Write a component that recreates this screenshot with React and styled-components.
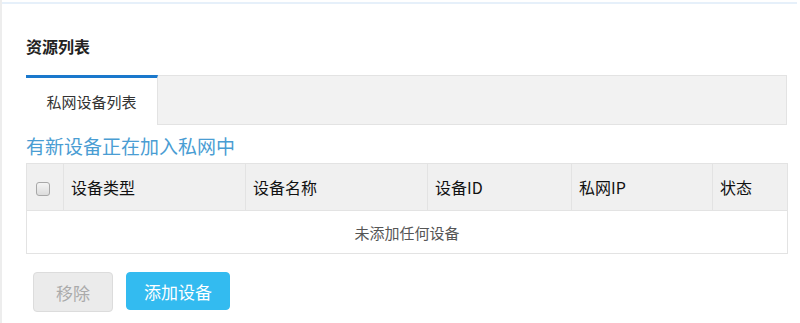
import styled, { createGlobalStyle } from "styled-components";

const GlobalStyle = createGlobalStyle`
  body {
    margin: 0;
    background: #fff;
    font-family: "Microsoft YaHei", "Noto Sans CJK SC", "Liberation Sans", sans-serif;
  }
`;

const columns = [
  { key: "type", label: "设备类型", width: 182 },
  { key: "name", label: "设备名称", width: 182 },
  { key: "id", label: "设备ID", width: 144 },
  { key: "ip", label: "私网IP", width: 141 },
  { key: "status", label: "状态", width: 75 },
];

function App() {
  return (
    <>
      <GlobalStyle />
      <Page>
        <TopLine />
        <Content>
          <Title>资源列表</Title>

          <TabBar>
            <Tab $active>私网设备列表</Tab>
          </TabBar>

          <Notice>有新设备正在加入私网中</Notice>

          <Table>
            <colgroup>
              <col style={{ width: 37 }} />
              {columns.map((c) => (
                <col key={c.key} style={{ width: c.width }} />
              ))}
            </colgroup>
            <thead>
              <tr>
                <HeadCell $center>
                  <CheckBox type="checkbox" />
                </HeadCell>
                {columns.map((c) => (
                  <HeadCell key={c.key}>{c.label}</HeadCell>
                ))}
              </tr>
            </thead>
            <tbody>
              <tr>
                <EmptyCell colSpan={columns.length + 1}>未添加任何设备</EmptyCell>
              </tr>
            </tbody>
          </Table>

          <Actions>
            <Button $variant="disabled">移除</Button>
            <Button $variant="primary">添加设备</Button>
          </Actions>
        </Content>
      </Page>
    </>
  );
}

// contenedor principal con la línea gris de la izquierda
const Page = styled.div`
  width: 800px;
  height: 323px;
  box-sizing: border-box;
  border-left: 2px solid #ededed;
  padding-top: 2px;
  overflow: hidden;
`;

const TopLine = styled.div`
  height: 2px;
  margin-right: 3px;
  background: #e6f0fa;
`;

const Content = styled.div`
  padding: 31px 13px 0 24px;
`;

const Title = styled.div`
  font-size: 16px;
  font-weight: bold;
  color: #222;
  line-height: 22px;
  height: 22px;
`;

const TabBar = styled.div`
  margin-top: 18px;
  display: flex;
  height: 50px;
  box-sizing: border-box;
  background: #f2f2f2;
  border: 1px solid #e3e3e3;
  border-left: none;
`;

const Tab = styled.div`
  width: 132px;
  box-sizing: border-box;
  margin: -1px 0 -1px 0;
  display: flex;
  align-items: center;
  justify-content: center;
  font-size: 15px;
  color: #333;
  background: ${(p) => (p.$active ? "#fff" : "transparent")};
  border-top: 3px solid ${(p) => (p.$active ? "#1a78cc" : "transparent")};
  border-right: 1px solid #e3e3e3;
  padding-bottom: 1px;
`;

const Notice = styled.div`
  margin-top: 8px;
  font-size: 19px;
  line-height: 26px;
  color: #4a9dd3;
`;

const Table = styled.table`
  margin-top: 4px;
  width: 100%;
  border-collapse: collapse;
  table-layout: fixed;
  border: 1px solid #e3e3e3;
`;

const HeadCell = styled.th`
  height: 46px;
  padding: 0 0 0 ${(p) => (p.$center ? "0" : "7px")};
  text-align: ${(p) => (p.$center ? "center" : "left")};
  background: #f0f0f0;
  border: 1px solid #e3e3e3;
  font-size: 16px;
  font-weight: normal;
  color: #111;
`;

const CheckBox = styled.input`
  appearance: none;
  width: 14px;
  height: 14px;
  margin: 0 4px 2px 0;
  vertical-align: middle;
  border: 1px solid #a8a8a8;
  border-radius: 3px;
  background: linear-gradient(#f4f4f4, #dcdcdc);
`;

const EmptyCell = styled.td`
  height: 42px;
  padding: 0;
  text-align: center;
  font-size: 15px;
  color: #555;
  background: #fff;
`;

const Actions = styled.div`
  margin-top: 18px;
  padding-left: 7px;
  display: flex;
  align-items: flex-start;
  gap: 13px;
`;

const Button = styled.button`
  height: ${(p) => (p.$variant === "primary" ? "38px" : "40px")};
  padding: 0;
  width: ${(p) => (p.$variant === "primary" ? "104px" : "80px")};
  border-radius: 4px;
  font-family: inherit;
  font-size: 17px;
  border: 1px solid ${(p) => (p.$variant === "primary" ? "#33bbf0" : "#dcdcdc")};
  background: ${(p) => (p.$variant === "primary" ? "#33bbf0" : "#ebebeb")};
  color: ${(p) => (p.$variant === "primary" ? "#fff" : "#aaa")};
`;

export default App;
